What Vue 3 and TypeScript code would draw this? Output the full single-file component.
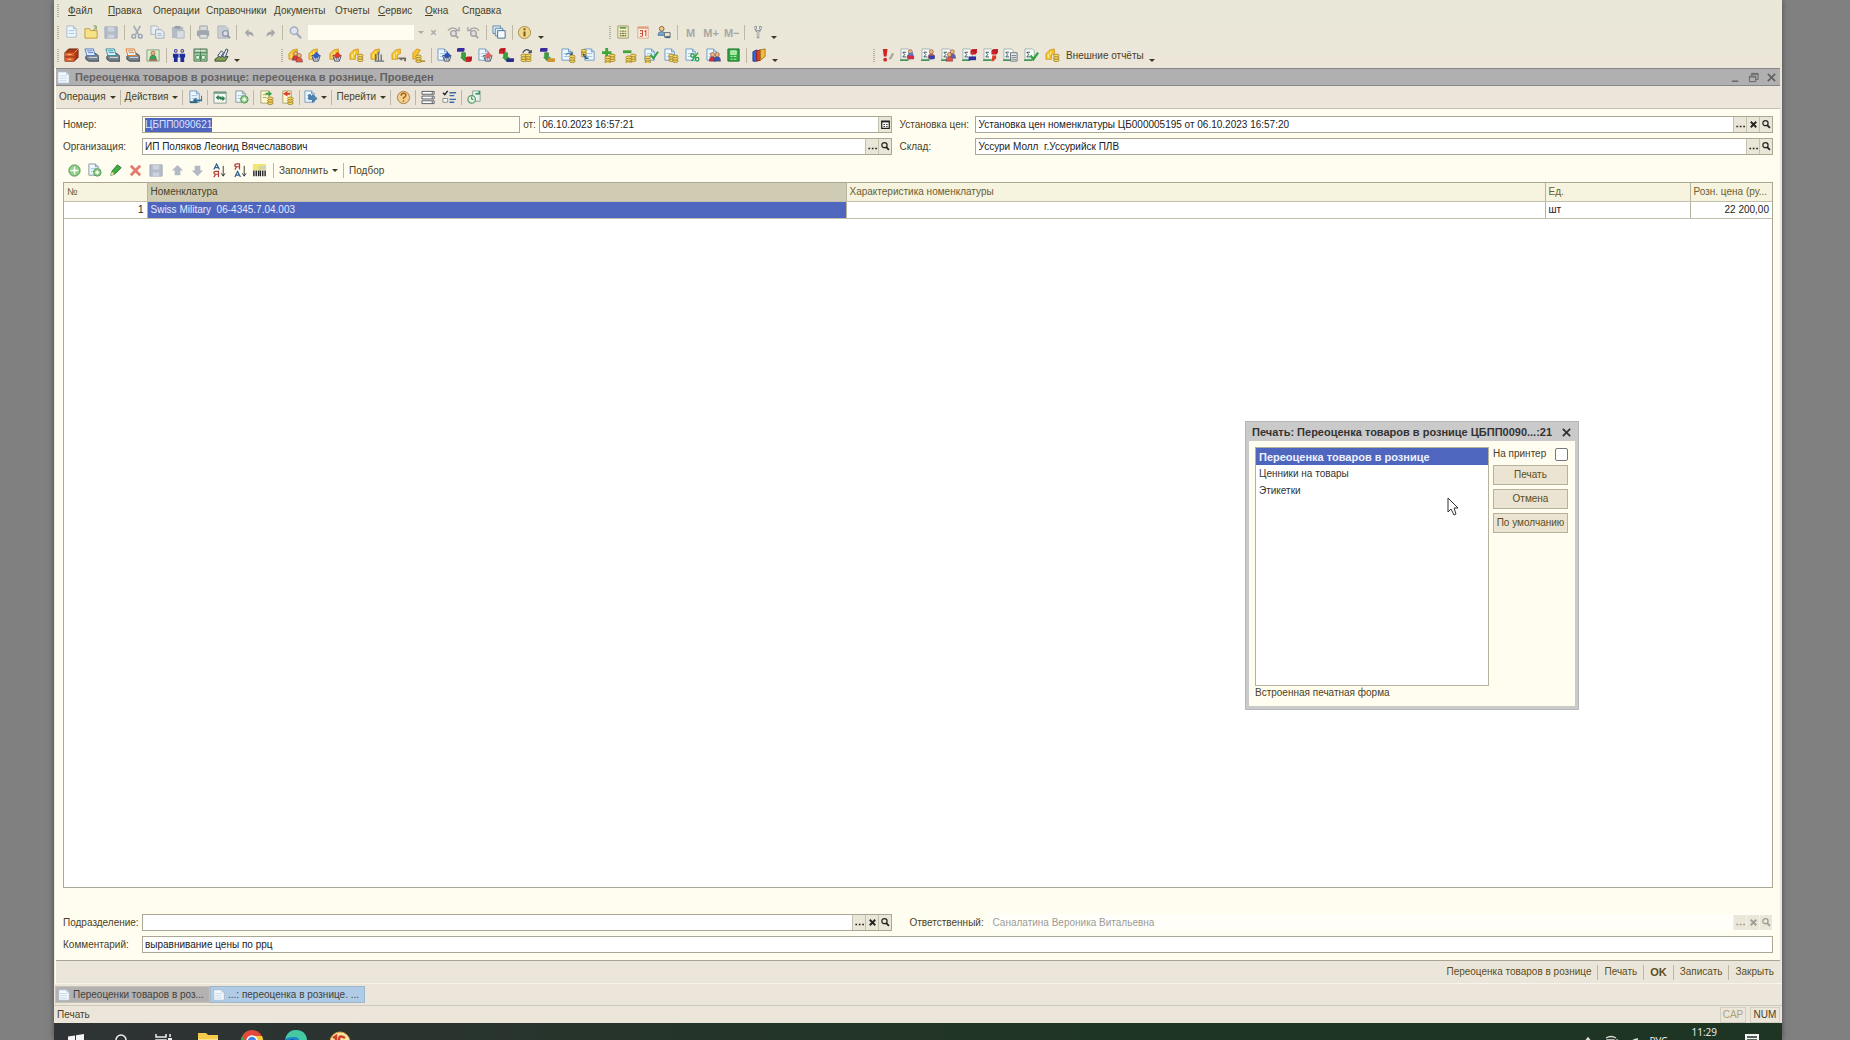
<script setup lang="ts">
import { onMounted, ref } from 'vue'

interface Tool {
  icon?: string
  sep?: boolean
  text?: string
  label: string
}

// Shared building blocks for the 16x16 toolbar glyphs
const page = (x = 1, y = 1, c = '#6f9cc4') =>
  `<path d="M${x} ${y}h7l3 3v9h-10z" fill="#eef7fd" stroke="${c}"/><path d="M${x + 7} ${y}v3h3" fill="none" stroke="${c}"/><path d="M${x + 2} ${y + 5}h6M${x + 2} ${y + 8}h6" stroke="#9fc0da"/>`
const coins = (x: number, y: number) =>
  `<g fill="#f5d75c" stroke="#94752a" stroke-width=".8"><ellipse cx="${x}" cy="${y + 5}" rx="3" ry="1.5"/><ellipse cx="${x}" cy="${y + 2.5}" rx="3" ry="1.5"/><ellipse cx="${x}" cy="${y}" rx="3" ry="1.5"/></g>`
const man = (x: number, y: number, c: string) =>
  `<path d="M${x - 3.5} ${y + 7}q0-5 3.5-5t3.5 5z" fill="${c}" stroke="#5a3550" stroke-width=".5"/><circle cx="${x}" cy="${y}" r="2.2" fill="#f0b47c" stroke="#7a4a33" stroke-width=".6"/>`
const glove = `<path d="M1 12V6l4-4 5-1v5l-3 1v5z" fill="#f6c32c" stroke="#c9901c" stroke-width=".8"/><path d="M3.500 6v5M6 4v3" stroke="#fff09a" stroke-width="1.200"/>`
const basket = (x: number, y: number, c: string) =>
  `<path d="M${x} ${y}h9l-2 6h-5z" fill="#dce3ea" stroke="#444f63"/><path d="M${x + 1} ${y}l4-4 4 4-3 3h-3z" fill="${c}"/><path d="M${x + 2} ${y + 2}v3m2-3v3m2-3v3" stroke="#5a6678" stroke-width=".7"/>`
const box = (x: number, y: number, c: string) =>
  `<path d="M${x} ${y + 2}l2-2h5v4l-2 2h-5z" fill="${c}"/><path d="M${x} ${y + 2}h5v4m0-4l2-2" fill="none" stroke="#0005" stroke-width=".7"/>`
const slab = (x: number, y: number, c: string) =>
  `<path d="M${x} ${y + 1}l1-1h7v3l-1 1h-7z" fill="${c}"/>`
const arrowDn = `<path d="M5 5h4v5h2l-3 4-4-4h1z" fill="#3aa33a" stroke="#1e6e2b" stroke-width=".6"/>`
const sigma = `<path d="M1 1h8l2 2v9H1z" fill="#f7fbf7" stroke="#a3b1b1"/><path d="M6.500 4.500H3l2 2.500-2 2.500h3.500" fill="none" stroke="#3b525c"/><path d="M0 13h9" stroke="#2d8d47" stroke-width="1.500"/>`
const printer = (c: string) =>
  `<path d="M2 9l3-3h8l3 3v5H5l-3-2z" fill="#76828c" stroke="#35404b"/><path d="M5 10h9" stroke="#d9e6ec"/><path d="M1 1h9l2 7H3z" fill="#e5f5ff" stroke="${c}"/><path d="M3 3h6M4 5h6" stroke="${c}"/>`
const plusBall = (x: number, y: number, r: number) =>
  `<circle cx="${x}" cy="${y}" r="${r}" fill="#8fce86" stroke="#519557"/><path d="M${x - r + 2} ${y}h${2 * r - 4}M${x} ${y - r + 2}v${2 * r - 4}" stroke="#fff" stroke-width="1.6"/>`
const lens = (c: string) =>
  `<circle cx="6.500" cy="6" r="4" fill="#dfe4ee" stroke="${c}" stroke-width="1.600"/><path d="M9 9l5 5" stroke="${c}" stroke-width="2.400"/>`
const sorter = (a: string, b: string) =>
  `<path d="${a}" fill="none" stroke="#33628e" stroke-width="1.300"/><path d="${b}" fill="none" stroke="#b23a3a" stroke-width="1.300"/><path d="M13 3v11M11 11l2 3 2-3" fill="none" stroke="#333"/>`

const icons: Record<string, string> = {
  file: page(3, 1, '#a8bccb'),
  sheet: `<path d="M1 1h11l3 3v11H1z" fill="#f4f9fd" stroke="#9fb4c6"/><path d="M12 1v3h3" fill="none" stroke="#9fb4c6"/><path d="M3 6h9M3 9h9M3 12h9" stroke="#bcd0e0"/>`,
  open: `<path d="M1 4h5l1 2h7v8H1z" fill="#f7e288" stroke="#c09a3a"/><path d="M10 6l3-4m0 3V1h-3" fill="none" stroke="#6f9a45"/>`,
  save: `<path d="M1 2h13v12H1z" fill="#b4bcc9" stroke="#a2aab8"/><path d="M4 2h7v5H4zM4 10h7v4H4z" fill="#cdd3dc"/>`,
  cut: `<path d="M4 1l5 9M11 1L6 10" stroke="#a3aab8" stroke-width="1.800"/><circle cx="4" cy="12" r="2" fill="none" stroke="#96a0b4" stroke-width="1.500"/><circle cx="11" cy="12" r="2" fill="none" stroke="#96a0b4" stroke-width="1.500"/>`,
  copy: `<path d="M1 1h6l2 2v7H1z" fill="#e8edf2" stroke="#a8b3c0"/><path d="M6 5h6l3 3v6H6z" fill="#e8edf2" stroke="#9ca9ba"/><path d="M8 9h4M8 11h5" stroke="#a0b0c2"/>`,
  paste: `<path d="M1 2h12v12H1z" fill="#b5bbc5"/><path d="M4 1h6v3H4z" fill="#989fac"/><path d="M6 6h8v8H6z" fill="#d8dde3" stroke="#adb5bf"/>`,
  print: `<path d="M4 1h8v5H4z" fill="#d8dbde" stroke="#9da2a8"/><path d="M1 6h13v6H1z" fill="#a1a6ad"/><path d="M4 10h8v4H4z" fill="#dfe1e3" stroke="#9da2a8"/>`,
  preview: `<path d="M1 1h8l3 3v10H1z" fill="#c9cdd4" stroke="#aeb4be"/><circle cx="9" cy="9" r="3" fill="#dde1e7" stroke="#9098a8" stroke-width="1.500"/><path d="M11 11l3 3" stroke="#9098a8" stroke-width="2"/>`,
  undo: `<path d="M3 8l4-4v3q6 0 5 6-1-3-5-3v3z" fill="#a5a8a8"/>`,
  redo: `<path d="M13 8L9 4v3q-6 0-5 6 1-3 5-3v3z" fill="#a5a8a8"/>`,
  find: lens('#a3adc2'),
  findNext: `<circle cx="8" cy="9" r="3" fill="#dedede" stroke="#a5a5a5" stroke-width="1.500"/><path d="M10 11l3 3" stroke="#a5a5a5" stroke-width="2"/><path d="M2 6q5-6 11 0m1-4v4h-4" fill="none" stroke="#a5a5a5" stroke-width="1.400"/>`,
  findPrev: `<circle cx="8" cy="9" r="3" fill="#dedede" stroke="#a5a5a5" stroke-width="1.500"/><path d="M10 11l3 3" stroke="#a5a5a5" stroke-width="2"/><path d="M14 6Q9 0 3 6M2 2v4h4" fill="none" stroke="#a5a5a5" stroke-width="1.400"/>`,
  wins: `<path d="M1 1h8v8H1z" fill="#e2f0f8" stroke="#5c86a5"/><path d="M3.500 3.500h8v8h-8z" fill="#e2f0f8" stroke="#5c86a5"/><path d="M6 6h8v8H6z" fill="#f5fbff" stroke="#416e91"/>`,
  info: `<circle cx="8" cy="8" r="6.500" fill="#f2d583" stroke="#a18f5c"/><path d="M8 7v5M8 3.500v2" stroke="#6a5520" stroke-width="2"/>`,
  calc: `<path d="M2 1h11v13H2z" fill="#fcf7c9" stroke="#999467"/><path d="M4 3h7" stroke="#6d9c54" stroke-width="2"/><path d="M4 6.500h7M4 9h7M4 11.500h7" stroke="#7f7a52" stroke-width="1.500" stroke-dasharray="2 .5"/>`,
  cal: `<path d="M2 2h11v12H2z" fill="#fff6ea" stroke="#d5a888"/><path d="M2 3h11" stroke="#e59a78" stroke-width="2"/><path d="M4 6h3v6M4 9h3M4 12h3M9 7l1.500-1v6" fill="none" stroke="#cf4e38" stroke-width="1.200"/>`,
  user: `<circle cx="5" cy="4" r="2.500" fill="#f1c88f" stroke="#80653f"/><path d="M1 11q0-4 4-4t4 4z" fill="#7ba9d0" stroke="#587c99"/><path d="M8 8h6v5H8z" fill="#e9e0c0" stroke="#68737d"/><path d="M9 13h5" stroke="#3e6384" stroke-width="2"/>`,
  wrench: `<path d="M5 1v3l1 2h3l1-2V1M7.500 6v8" fill="none" stroke="#8a9094" stroke-width="2.600"/><path d="M5 2v2l1 1h3l1-1V2M7.500 6v7" fill="none" stroke="#eef0f0" stroke-width="1"/>`,
  cabinet: `<path d="M1 5l4-4h10v9l-4 4H1z" fill="#a83c16" stroke="#6e260f"/><path d="M1 5h10v9H1z" fill="#e2612b"/><path d="M11 5l4-4" stroke="#f6a66b"/><path d="M1 9.500h10" stroke="#882c0f"/><path d="M4 7h4M4 12h4" stroke="#ffd0a0"/>`,
  prnBlue: printer('#5476bd'),
  prnTeal: printer('#2e8d9d'),
  prnOrange: printer('#dd7a2e'),
  manGreen: `<path d="M1 2h13v12H1z" fill="#d7efcb" stroke="#8ba180"/>${man(7.5, 5.5, '#35a651')}<path d="M3 13h9" stroke="#bd4a3c"/>`,
  twoMen: `<g fill="#1e2f9c"><circle cx="4" cy="3" r="2"/><circle cx="11" cy="3" r="2"/><path d="M1 6h6v4H6v5H2v-5H1zM8 6h6v4h-1v5H9v-5H8z"/></g><circle cx="4" cy="3" r="1.200" fill="#e6b289"/><circle cx="11" cy="3" r="1.200" fill="#e6b289"/>`,
  safe: `<path d="M1 1h14v13H1z" fill="#9fc79d" stroke="#55745a"/><path d="M1 5h14M8 1v13" stroke="#4c7a57"/><path d="M3 8h4v4H3zM9 8h4v4H9z" fill="#e4f6da" stroke="#4b9b61"/><path d="M3 3h10" stroke="#ebf5e4"/>`,
  ledger: `<path d="M1 12l4-3h10l-3 5H1z" fill="#84a04d" stroke="#3e4c37"/><path d="M4 8l4-5 2 2-3 5zM9 9l4-8 2 1-3 8z" fill="#dfe9ef" stroke="#3d4a68"/>`,
  gManRed: glove + man(8, 6, '#d8373a') + man(12, 8, '#e4573f'),
  gBasketBlue: glove + basket(4, 8, '#315fc2'),
  gBasketRed: glove + basket(4, 8, '#df3a2b'),
  gCoins: glove + coins(12, 8),
  gBars: glove + `<path d="M6 6v8M9 4v10M12 7v7M5 14h10" stroke="#68747c" stroke-width="1.500"/>`,
  gKey: glove + `<path d="M8 11h7v3M11 11v2" fill="none" stroke="#6b6a63" stroke-width="2"/>`,
  gCoins2: `<path d="M2 12V5l4-4 4 1-3 5v4z" fill="#f6c32c" stroke="#c9901c" stroke-width=".8"/>` + coins(8, 9) + `<path d="M10 14h5" stroke="#a5821f" stroke-width="1.500"/>`,
  dBasketBlue: page() + basket(6, 8, '#2d55b5'),
  boxBlueRed: slab(0, 0, '#3b2c9c') + arrowDn + box(9, 9, '#d3222a'),
  dBasketRed: page() + basket(6, 8, '#dd6668'),
  boxRedBlue: box(0, 0, '#d3222a') + arrowDn + slab(8, 11, '#2c2c8e'),
  coinsTurn: coins(5, 8) + coins(10, 8) + `<path d="M4 5q4-6 8-1m1-2v3h-3" fill="none" stroke="#384857" stroke-width="1.300"/>`,
  boxBlueOr: slab(0, 0, '#3b2c9c') + arrowDn + slab(8, 11, '#d3932e'),
  dTurn: page() + coins(12, 9) + `<path d="M5 7q4-3 7-1m0-2v3h-3" fill="none" stroke="#2c5c7e"/>`,
  dReturn: page(4, 1) + coins(3, 3) + `<path d="M5 10q-3-2-2-4m5 5H5V8" fill="none" stroke="#27629d" stroke-width="1.500"/>`,
  plusCoins: `<path d="M5 0v10M0 5h10" stroke="#3fa63c" stroke-width="3"/>` + coins(11, 8) + coins(6, 10),
  minusCoins: `<path d="M0 4h9" stroke="#3fa63c" stroke-width="3"/>` + coins(11, 8) + coins(6, 10),
  dCheck: page() + coins(4, 10) + `<path d="M7 7l3 4 5-7" fill="none" stroke="#31a047" stroke-width="2.200"/>`,
  dCoins: page() + coins(8, 8) + coins(12, 9),
  dPercent: page() + `<path d="M7 14l7-9" stroke="#2ca04c" stroke-width="1.500"/><circle cx="8" cy="8" r="1.800" fill="#fff" stroke="#2ca04c" stroke-width="1.500"/><circle cx="13" cy="12" r="1.800" fill="#fff" stroke="#2ca04c" stroke-width="1.500"/>`,
  dMen: page() + man(7, 7, '#c9303c') + man(12, 7, '#3656b4'),
  greenBook: `<path d="M2 1h12v13H2z" fill="#31a944" stroke="#1c7130"/><path d="M5 3h6v4H5zM5 9h2m1 0h3M5 12h2m1 0h3" fill="#a7e5a0" stroke="#bdf0b4"/>`,
  folders: `<path d="M1 4l4-2v12H1z" fill="#3564d3" stroke="#203c93"/><path d="M5 3l4-1v11l-4 1z" fill="#e0402f" stroke="#952218"/><path d="M9 2l5-1v8l-5 4z" fill="#f5bb36" stroke="#a8781e"/>`,
  bang: `<path d="M3 1h5l-1 8H4z" fill="#d42420"/><circle cx="5.500" cy="12.500" r="2" fill="#d42420"/><path d="M9 12l4-7 2 1-3 6z" fill="#a9a9a0"/>`,
  sManBlue: sigma + man(11, 4, '#dc2f3d') + `<path d="M8 8h7v4H9z" fill="#d32c44"/><path d="M9 5h5v3H9z" fill="#4c7fcb"/>`,
  sManRed: sigma + man(11, 4, '#e55b4c') + `<path d="M8 8h7l-1 4H9z" fill="#2f41b3"/>`,
  sMen: sigma + man(12, 4, '#5a66b0') + man(9, 7, '#e25448'),
  sBoxes: sigma + box(9, 1, '#d3222a') + `<path d="M7 9h8v4H7z" fill="#2c2f9e"/>`,
  sBoxRed: sigma + box(9, 1, '#d3222a') + `<path d="M10 8h4v3l-3 3H9z" fill="#e23a2a"/>`,
  sDoc: sigma + `<path d="M8 5h7v9H8z" fill="#e7eaec" stroke="#6d757d"/><path d="M9 8h5M9 10h5M9 12h5" stroke="#78828a"/>`,
  sCheck: sigma + `<path d="M7 8l3 4 5-7" fill="none" stroke="#31a047" stroke-width="2.400"/>`,
  goBack: page(2, 1) + `<path d="M14 6v4H9V8l-4 3 4 3v-2h6V6z" fill="#316d97"/><path d="M2 13h8" stroke="#2f607f" stroke-width="2"/>`,
  refresh: `<path d="M1 2h13v12H1z" fill="#f7faf2" stroke="#8a9a8d"/><path d="M1 3h13" stroke="#6d9c82" stroke-width="2"/><path d="M3 8l3-3v2h3v2H6v2zM13 9l-3 3v-2H7V8h3V6z" fill="#2d7d51"/>`,
  addDoc: page(2, 1, '#84989f') + plusBall(11, 10, 4),
  post: `<path d="M2 1h9v13H2z" fill="#fff7cd" stroke="#aaa37a"/><path d="M4 5h5M4 8h4" stroke="#a4a078"/><path d="M7 5V3h3V1l4 3-4 3V5z" fill="#3da147"/>` + coins(12, 9),
  unpost: `<path d="M3 1h9v13H3z" fill="#fff7cd" stroke="#aaa37a"/><path d="M8 5h3V3H8V1L3 4l5 3z" fill="#df3f2f"/>` + coins(11, 9),
  goDoc: page(1, 1) + `<path d="M5 5v5h4v3l5-4-5-4v2H7V5z" fill="#4e87b6" stroke="#285a8a" stroke-width=".7"/>`,
  help: `<circle cx="8" cy="8" r="6.500" fill="#f6cf8c" stroke="#a57c49"/><path d="M5.500 6q0-2.500 2.500-2.500t2.500 2q0 1.500-2.500 3v1M8 11v1.500" fill="none" stroke="#a36217" stroke-width="1.500"/>`,
  rows: `<path d="M1 1.500h13v3H1zM1 6.500h13v3H1zM1 11.500h13v3H1z" fill="#fff" stroke="#545b60"/><path d="M12 2v2M12 7v2M12 12v2" stroke="#4b4f53"/>`,
  checks: `<path d="M1 3l2 2 3-4" fill="none" stroke="#222" stroke-width="1.500"/><path d="M1 9h5v4H1z" fill="#fff" stroke="#888"/><path d="M8 3h7M8 6h5M8 10h7M8 13h5" stroke="#3e68ae" stroke-width="1.500"/>`,
  docClock: `<path d="M6 1h8v11H6z" fill="#e5f1ea" stroke="#8aa09a"/><path d="M9 4h4V1" fill="none" stroke="#2c8f50" stroke-width="1.500"/><circle cx="5" cy="10" r="4" fill="#e8f4e4" stroke="#5a9a6c" stroke-width="1.300"/><path d="M5 7v3h2" fill="none" stroke="#44735a"/>`,
  add: plusBall(8, 8, 6),
  pencil: `<path d="M3 13l1-4 6-7 4 3-7 7z" fill="#3fae3b" stroke="#237030"/><path d="M3 13l1-4 3 3z" fill="#f2e3ad"/>`,
  del: `<path d="M3 3l10 10M13 3L3 13" stroke="#e27b6f" stroke-width="3"/>`,
  up: `<path d="M8 2l6 6h-3v5H5V8H2z" fill="#b3bac3"/>`,
  down: `<path d="M8 14l6-6h-3V3H5v5H2z" fill="#b3bac3"/>`,
  sortAz: sorter('M3 7l3-6 3 6M4 5h4', 'M8 15V9H5q-2 0-2 1.500T5 12h3M5 12l-2 3'),
  sortZa: sorter('M3 15l3-6 3 6M4 13h4', 'M8 7V1H5Q3 1 3 2.500T5 4h3M5 4L3 7'),
  barcode: `<path d="M1 1h14v7H1z" fill="#f4e66a"/><path d="M7 3h8v4H7z" fill="#cfd3b8"/><path d="M1 8h14v7H1z" fill="#fff"/><path d="M2 8v6M4.500 8v6M7 8v6M9 8v6M11.500 8v6M14 8v6" stroke="#222" stroke-width="1.500"/>`,
  lens: `<circle cx="6.500" cy="6" r="3.800" fill="none" stroke="currentColor" stroke-width="1.800"/><path d="M9 9l4 4" stroke="currentColor" stroke-width="2.600"/>`,
  cross: `<path d="M4 4l8 8M12 4l-8 8" stroke="currentColor" stroke-width="2.600"/>`,
  dots: `<path d="M2 11h2.500M7 11h2.500M12 11h2.500" stroke="currentColor" stroke-width="2.200"/>`,
  calBtn: `<path d="M2.500 3h11v10.500h-11z" fill="#fff" stroke="#222" stroke-width="1.800"/><path d="M2 4h12" stroke="#222" stroke-width="2"/><path d="M5 8h2M9 8h2M5 11h2M9 11h2" stroke="#222" stroke-width="1.600"/>`,
}

const t = (icon: string, label: string): Tool => ({ icon, label })
const sep: Tool = { sep: true, label: '' }

const menu = [
  ['', 'Ф', 'айл'], ['', 'П', 'равка'], ['Операции', '', ''], ['Справочники', '', ''], ['Документы', '', ''],
  ['Отчеты', '', ''], ['', 'С', 'ервис'], ['', 'О', 'кна'], ['Сп', 'р', 'авка'],
]

const fileTools: Tool[] = [
  t('file', 'Новый'), t('open', 'Открыть'), t('save', 'Сохранить'), sep,
  t('cut', 'Вырезать'), t('copy', 'Копировать'), t('paste', 'Вставить'), sep,
  t('print', 'Печать'), t('preview', 'Просмотр'), sep, t('undo', 'Отменить'), t('redo', 'Вернуть'), sep, t('find', 'Найти'),
]
const findTools: Tool[] = [t('findNext', 'Найти далее'), t('findPrev', 'Найти ранее'), sep, t('wins', 'Окна'), sep, t('info', 'Справка')]
const calcTools: Tool[] = [
  t('calc', 'Калькулятор'), t('cal', 'Календарь'), t('user', 'Пользователь'), sep,
  { text: 'M', label: 'M' }, { text: 'M+', label: 'M+' }, { text: 'M−', label: 'M−' }, sep, t('wrench', 'Настройка'),
]
const deskTools: Tool[] = [
  t('cabinet', 'Номенклатура'), t('prnBlue', 'Чек'), t('prnTeal', 'Отчет'), t('prnOrange', 'Возврат'), t('manGreen', 'Кассир'), sep,
  t('twoMen', 'Контрагенты'), t('safe', 'Касса'), t('ledger', 'Журнал'),
]
const goodsTools: Tool[] = ['gManRed', 'gBasketBlue', 'gBasketRed', 'gCoins', 'gBars', 'gKey', 'gCoins2'].map((i) => t(i, 'Журнал документов'))
const docTools: Tool[] = [
  'dBasketBlue', 'boxBlueRed', 'dBasketRed', 'boxRedBlue', 'coinsTurn', 'boxBlueOr', 'dTurn', 'dReturn',
  'plusCoins', 'minusCoins', 'dCheck', 'dCoins', 'dPercent', 'dMen', 'greenBook',
].map((i) => t(i, 'Документ'))
const reportTools: Tool[] = ['bang', 'sManBlue', 'sManRed', 'sMen', 'sBoxes', 'sBoxRed', 'sDoc', 'sCheck', 'gCoins'].map((i) => t(i, 'Отчет'))
const rowTools: Tool[] = [
  t('add', 'Добавить'), t('addDoc', 'Скопировать'), t('pencil', 'Изменить'), t('del', 'Удалить'), t('save', 'Сохранить'),
  t('up', 'Вверх'), t('down', 'Вниз'), t('sortAz', 'По возрастанию'), t('sortZa', 'По убыванию'), t('barcode', 'Штрихкод'),
]

const actions = ['Переоценка товаров в рознице', 'Печать', 'OK', 'Записать', 'Закрыть']
const forms = ['Переоценка товаров в рознице', 'Ценники на товары', 'Этикетки']
const current = ref(0)
const toPrinter = ref(false)
const number = ref('ЦБПП0090621')
const numberBox = ref<HTMLInputElement | null>(null)

onMounted(() => {
  numberBox.value?.focus()
  numberBox.value?.select()
})
</script>

<template>
  <div class="desktop">
    <div class="app">
      <header class="bars">
        <nav class="menu">
          <i class="grip"></i>
          <a v-for="(m, i) in menu" :key="i" href="#">{{ m[0] }}<u>{{ m[1] }}</u>{{ m[2] }}</a>
        </nav>

        <div class="bar">
          <i class="grip"></i>
          <div class="group g-file">
            <template v-for="(b, i) in fileTools" :key="i">
              <i v-if="b.sep" class="sep"></i>
              <button v-else class="tool" :aria-label="b.label"><svg viewBox="0 0 16 16" v-html="icons[b.icon!]"></svg></button>
            </template>
          </div>
          <input class="search" aria-label="Поиск" />
          <button class="mini" aria-label="История поиска"><i class="caret pale"></i></button>
          <button class="mini pale-x" aria-label="Очистить"><svg viewBox="0 0 16 16" v-html="icons.cross"></svg></button>
          <div class="group g-find">
            <template v-for="(b, i) in findTools" :key="i">
              <i v-if="b.sep" class="sep"></i>
              <button v-else class="tool" :aria-label="b.label"><svg viewBox="0 0 16 16" v-html="icons[b.icon!]"></svg></button>
            </template>
          </div>
          <i class="caret more"></i>
          <i class="grip second"></i>
          <div class="group g-calc">
            <template v-for="(b, i) in calcTools" :key="i">
              <i v-if="b.sep" class="sep"></i>
              <button v-else-if="b.text" class="tool memory">{{ b.text }}</button>
              <button v-else class="tool" :aria-label="b.label"><svg viewBox="0 0 16 16" v-html="icons[b.icon!]"></svg></button>
            </template>
          </div>
          <i class="caret more"></i>
        </div>

        <div class="bar">
          <i class="grip"></i>
          <div class="group g-desk">
            <template v-for="(b, i) in deskTools" :key="i">
              <i v-if="b.sep" class="sep"></i>
              <button v-else class="tool" :aria-label="b.label"><svg viewBox="0 0 16 16" v-html="icons[b.icon!]"></svg></button>
            </template>
          </div>
          <i class="caret more"></i>
          <i class="grip goods"></i>
          <div class="group g-goods">
            <button v-for="(b, i) in goodsTools" :key="i" class="tool" :aria-label="b.label"><svg viewBox="0 0 16 16" v-html="icons[b.icon!]"></svg></button>
          </div>
          <i class="sep loose"></i>
          <div class="group g-docs">
            <button v-for="(b, i) in docTools" :key="i" class="tool" :aria-label="b.label"><svg viewBox="0 0 16 16" v-html="icons[b.icon!]"></svg></button>
          </div>
          <i class="sep loose"></i>
          <button class="tool" aria-label="Папки"><svg viewBox="0 0 16 16" v-html="icons.folders"></svg></button>
          <i class="caret more"></i>
          <i class="grip reports"></i>
          <div class="group g-reports">
            <button v-for="(b, i) in reportTools" :key="i" class="tool" :aria-label="b.label"><svg viewBox="0 0 16 16" v-html="icons[b.icon!]"></svg></button>
          </div>
          <button class="word ext">Внешние отчёты</button>
          <i class="caret more"></i>
        </div>
      </header>

      <section class="window">
        <div class="title">
          <svg class="title-icon" viewBox="0 0 16 16" v-html="icons.sheet"></svg>
          <h1>Переоценка товаров в рознице: переоценка в рознице. Проведен</h1>
          <button aria-label="Свернуть"><svg viewBox="0 0 12 12"><path d="M2 10h7" stroke="currentColor" stroke-width="1.500" /></svg></button>
          <button aria-label="Восстановить"><svg viewBox="0 0 12 12"><path d="M4 4V1.500h7V8H8.500M1.500 4.500h7v6h-7zM1.500 5.500h7M4 2.500h7" fill="none" stroke="currentColor" /></svg></button>
          <button aria-label="Закрыть окно"><svg viewBox="0 0 12 12"><path d="M2 2l8 8M10 2l-8 8" stroke="currentColor" stroke-width="1.800" /></svg></button>
        </div>

        <div class="commands">
          <button class="word">Операция<i class="caret"></i></button><i class="sep"></i>
          <button class="word">Действия<i class="caret"></i></button><i class="sep"></i>
          <button class="tool" aria-label="Провести и закрыть"><svg viewBox="0 0 16 16" v-html="icons.goBack"></svg></button><i class="sep"></i>
          <button class="tool" aria-label="Обновить"><svg viewBox="0 0 16 16" v-html="icons.refresh"></svg></button>
          <button class="tool" aria-label="Скопировать"><svg viewBox="0 0 16 16" v-html="icons.addDoc"></svg></button><i class="sep"></i>
          <button class="tool" aria-label="Провести"><svg viewBox="0 0 16 16" v-html="icons.post"></svg></button>
          <button class="tool" aria-label="Отменить проведение"><svg viewBox="0 0 16 16" v-html="icons.unpost"></svg></button><i class="sep"></i>
          <button class="tool with-caret" aria-label="На основании"><svg viewBox="0 0 16 16" v-html="icons.goDoc"></svg><i class="caret"></i></button><i class="sep"></i>
          <button class="word">Перейти<i class="caret"></i></button><i class="sep"></i>
          <button class="tool" aria-label="Справка"><svg viewBox="0 0 16 16" v-html="icons.help"></svg></button><i class="sep"></i>
          <button class="tool" aria-label="Список"><svg viewBox="0 0 16 16" v-html="icons.rows"></svg></button>
          <button class="tool" aria-label="Настройка списка"><svg viewBox="0 0 16 16" v-html="icons.checks"></svg></button><i class="sep"></i>
          <button class="tool" aria-label="История"><svg viewBox="0 0 16 16" v-html="icons.docClock"></svg></button>
        </div>

        <div class="form">
          <div class="fields">
            <div class="line">
              <label class="lead" for="num">Номер:</label>
              <span class="field cream w-num"><input id="num" ref="numberBox" v-model="number" /></span>
              <label class="from" for="date">от:</label>
              <span class="field w-date"><input id="date" value="06.10.2023 16:57:21" />
                <button aria-label="Выбрать дату"><svg viewBox="0 0 16 16" v-html="icons.calBtn"></svg></button></span>
            </div>
            <div class="line">
              <label class="mid" for="price">Установка цен:</label>
              <span class="field"><input id="price" value="Установка цен номенклатуры ЦБ000005195 от 06.10.2023 16:57:20" />
                <button aria-label="Выбрать"><svg viewBox="0 0 16 16" v-html="icons.dots"></svg></button>
                <button aria-label="Очистить"><svg viewBox="0 0 16 16" v-html="icons.cross"></svg></button>
                <button aria-label="Открыть"><svg viewBox="0 0 16 16" v-html="icons.lens"></svg></button></span>
            </div>
            <div class="line">
              <label class="lead" for="org">Организация:</label>
              <span class="field"><input id="org" value="ИП Поляков Леонид Вячеславович" />
                <button aria-label="Выбрать"><svg viewBox="0 0 16 16" v-html="icons.dots"></svg></button>
                <button aria-label="Открыть"><svg viewBox="0 0 16 16" v-html="icons.lens"></svg></button></span>
            </div>
            <div class="line">
              <label class="mid" for="store">Склад:</label>
              <span class="field"><input id="store" value="Уссури Молл  г.Уссурийск ПЛВ" />
                <button aria-label="Выбрать"><svg viewBox="0 0 16 16" v-html="icons.dots"></svg></button>
                <button aria-label="Открыть"><svg viewBox="0 0 16 16" v-html="icons.lens"></svg></button></span>
            </div>
          </div>

          <div class="row-tools">
            <div class="group g-rows">
              <button v-for="b in rowTools" :key="b.label" class="tool" :aria-label="b.label"><svg viewBox="0 0 16 16" v-html="icons[b.icon!]"></svg></button>
            </div>
            <i class="sep"></i>
            <button class="word">Заполнить<i class="caret"></i></button>
            <i class="sep"></i>
            <button class="word">Подбор</button>
          </div>

          <div class="sheet">
            <table>
              <colgroup><col class="c-no" /><col class="c-name" /><col class="c-name" /><col class="c-unit" /><col class="c-price" /></colgroup>
              <thead>
                <tr><th>№</th><th class="active">Номенклатура</th><th>Характеристика номенклатуры</th><th>Ед.</th><th>Розн. цена (ру...</th></tr>
              </thead>
              <tbody>
                <tr><td class="num">1</td><td class="picked">Swiss Military&nbsp; 06-4345.7.04.003</td><td></td><td>шт</td><td class="num">22 200,00</td></tr>
              </tbody>
            </table>
          </div>

          <div class="fields bottom">
            <div class="line">
              <label class="lead" for="dep">Подразделение:</label>
              <span class="field"><input id="dep" />
                <button aria-label="Выбрать"><svg viewBox="0 0 16 16" v-html="icons.dots"></svg></button>
                <button aria-label="Очистить"><svg viewBox="0 0 16 16" v-html="icons.cross"></svg></button>
                <button aria-label="Открыть"><svg viewBox="0 0 16 16" v-html="icons.lens"></svg></button></span>
            </div>
            <div class="line owner">
              <label class="resp" for="resp">Ответственный:</label>
              <span class="field off"><input id="resp" value="Саналатина Вероника Витальевна" disabled />
                <button disabled aria-label="Выбрать"><svg viewBox="0 0 16 16" v-html="icons.dots"></svg></button>
                <button disabled aria-label="Очистить"><svg viewBox="0 0 16 16" v-html="icons.cross"></svg></button>
                <button disabled aria-label="Открыть"><svg viewBox="0 0 16 16" v-html="icons.lens"></svg></button></span>
            </div>
            <div class="line wide">
              <label class="lead" for="note">Комментарий:</label>
              <span class="field"><input id="note" value="выравнивание цены по ррц" /></span>
            </div>
          </div>
        </div>

        <div class="actions">
          <template v-for="(a, i) in actions" :key="a">
            <i v-if="i" class="sep"></i>
            <button class="word" :class="{ main: a === 'OK' }">{{ a }}</button>
          </template>
        </div>

        <div class="dialog" role="dialog" aria-labelledby="dlg-title">
          <div class="dlg-head">
            <h2 id="dlg-title">Печать: Переоценка товаров в рознице ЦБПП0090...:21</h2>
            <button aria-label="Закрыть диалог"><svg viewBox="0 0 12 12"><path d="M2 2l8 8M10 2l-8 8" stroke="currentColor" stroke-width="2" /></svg></button>
          </div>
          <div class="dlg-body">
            <ul class="list">
              <li v-for="(f, i) in forms" :key="f" :class="{ on: i === current }" @click="current = i">{{ f }}</li>
            </ul>
            <div class="side">
              <label class="tick" for="toprn">На принтер<input id="toprn" v-model="toPrinter" type="checkbox" /></label>
              <button>Печать</button>
              <button>Отмена</button>
              <button>По умолчанию</button>
            </div>
          </div>
          <p class="hint">Встроенная печатная форма</p>
          <svg class="cursor" viewBox="0 0 12 19"><path d="M1 1v14l3-3 3 6 2-1-2-6h4z" fill="#fff" stroke="#333" /></svg>
        </div>
      </section>

      <div class="tabs">
        <button><svg viewBox="0 0 16 16" v-html="icons.sheet"></svg>Переоценки товаров в роз...</button>
        <button class="on"><svg viewBox="0 0 16 16" v-html="icons.sheet"></svg>...: переоценка в рознице. ...</button>
      </div>

      <footer class="status">
        <span>Печать</span>
        <span class="lamp dim">CAP</span>
        <span class="lamp">NUM</span>
      </footer>

      <div class="taskbar">
        <svg class="task" viewBox="0 0 24 24"><path d="M4 6.500l7-1V12H4zM12 5.300l8-1.300v8h-8zM4 13h7v6H4zM12 13h8v7h-8z" fill="#f5f5f5" /></svg>
        <svg class="task" viewBox="0 0 24 24"><circle cx="13" cy="10" r="5" fill="none" stroke="#eee" stroke-width="1.500" /><path d="M10 14l-5 6" stroke="#eee" stroke-width="1.500" /></svg>
        <svg class="task" viewBox="0 0 24 24"><path d="M4 4v3h10V4M4 10h10v8H4zM18 4v3M18 12v7" fill="none" stroke="#eee" stroke-width="1.500" /><path d="M16 8h4v3h-4z" fill="#eee" /></svg>
        <svg class="task" viewBox="0 0 24 24"><path d="M2 3h8l2 2h10v16H2z" fill="#f6cb4c" /><path d="M2 9h20v12H2z" fill="#fae08b" /></svg>
        <svg class="task" viewBox="0 0 24 24"><circle cx="12" cy="11" r="11" fill="#e24a3b" /><path d="M2 6l6 9 4 7A11 11 0 0 1 2 6z" fill="#39a853" /><path d="M12 6h10a11 11 0 0 1-10 16l5-8z" fill="#f7c93c" /><circle cx="12" cy="11" r="5" fill="#4285e8" stroke="#fff" stroke-width="1.500" /></svg>
        <svg class="task" viewBox="0 0 24 24"><circle cx="12" cy="11" r="11" fill="#1a86cf" /><path d="M1 9Q4 0 12 0q10 0 11 10-1 5-8 4 2-7-5-7-6 0-9 2z" fill="#45c9a0" /><path d="M10 9q-4 8 4 12-9 2-12-5-1-7 8-7z" fill="#15599f" /></svg>
        <svg class="task" viewBox="0 0 24 24"><circle cx="12" cy="12" r="10" fill="#f6e6a6" stroke="#d99a43" /><path d="M5 8l3-2v9M17 8q-6-4-6 2t6 4" fill="none" stroke="#cf3f28" stroke-width="2.500" /></svg>
        <span class="space"></span>
        <svg class="tray" viewBox="0 0 16 16"><path d="M4 9l4-5 4 5" fill="none" stroke="#ddd" stroke-width="1.500" /></svg>
        <svg class="tray" viewBox="0 0 16 16"><path d="M3 4q5-3 10 0M4 6h7v7H4zM11 8l3-2v6l-3-2" fill="none" stroke="#ddd" stroke-width="1.300" /></svg>
        <svg class="tray" viewBox="0 0 16 16"><path d="M3 12q1-6 9-7M6 13q1-4 6-5M9 13q1-1 3-2" fill="none" stroke="#ddd" stroke-width="1.300" /></svg>
        <span class="lang">РУС</span>
        <time class="clock">11:29</time>
        <svg class="note" viewBox="0 0 16 16"><path d="M1 2h14v11h-4l-3 3v-3H1z" fill="#f2f2f2" /><path d="M3 5h10M3 8h10" stroke="#243526" stroke-width="1.500" /></svg>
      </div>
    </div>
  </div>
</template>

<style>
html,
body,
#app {
  height: 100%;
}
body {
  margin: 0;
}
</style>

<style scoped>
.desktop {
  box-sizing: border-box;
  height: 100vh;
  overflow: hidden;
  padding: 0 68px 0 54px;
  background: #808080;
  color: #4a4126;
  font: 10px/14px "Liberation Sans", sans-serif;
}
.desktop *,
.desktop *::before {
  box-sizing: border-box;
}
button,
input {
  margin: 0;
  padding: 0;
  border: 0;
  background: none;
  color: inherit;
  font: inherit;
}
button {
  display: flex;
  align-items: center;
  justify-content: center;
  white-space: nowrap;
}
label {
  white-space: nowrap;
}
svg {
  display: block;
  flex: none;
}
h1,
h2,
p,
ul {
  margin: 0;
  padding: 0;
}
.app {
  display: flex;
  flex-direction: column;
  height: 100%;
  background: #ebe6d9;
  box-shadow: 0 0 6px #4d4d4d;
}
.bars {
  height: 68px;
  background: linear-gradient(#e9e8d9, #ece6d9);
}
.menu {
  display: grid;
  grid-template-columns: 14px 40px 45px 53px 68px 61px 43px 47px 37px 60px;
  align-items: center;
  height: 21px;
}
.menu a {
  color: inherit;
  text-decoration: none;
}
.grip {
  flex: none;
  width: 2px;
  height: 13px;
  margin: 0 4px 0 3px;
  background: repeating-linear-gradient(#b5b19f 0 1px, transparent 1px 2px);
}
.bar {
  display: flex;
  align-items: center;
  height: 23px;
}
.group {
  display: flex;
  flex: none;
  align-items: center;
  justify-content: space-between;
}
.tool {
  flex: none;
  width: 16px;
  height: 16px;
}
.tool svg {
  width: 15px;
  height: 15px;
}
.sep {
  flex: none;
  width: 1px;
  height: 15px;
  background: #bdb8a6;
}
.caret {
  flex: none;
  border: 3px solid transparent;
  border-top-color: #3d3822;
  border-bottom: 0;
}
.caret.pale {
  border-top-color: #aaa;
}
.more {
  margin-top: 10px;
  margin-left: 5px;
}
.g-file {
  width: 241px;
}
.search {
  width: 106px;
  height: 15px;
  margin-left: 4px;
  background: #fffdf1;
}
.mini {
  width: 13px;
  height: 13px;
}
.pale-x svg {
  width: 9px;
  height: 9px;
  color: #aaa;
}
.g-find {
  width: 88px;
  margin-left: 5px;
}
.second {
  margin-left: 65px;
}
.g-calc {
  width: 151px;
}
.memory {
  color: #a8a8a3;
  font: bold 11px/14px "Liberation Sans", sans-serif;
}
.g-desk {
  width: 166px;
}
.goods {
  margin-left: 41px;
}
.g-goods {
  width: 140px;
}
.loose {
  margin: 0 4px;
}
.g-docs {
  width: 306px;
}
.reports {
  margin-left: 95px;
}
.g-reports {
  width: 181px;
}
.ext {
  margin-left: 6px;
}

.window {
  position: relative;
  display: flex;
  flex: 1;
  flex-direction: column;
  min-height: 0;
  margin: 0 2px 0 1px;
  border-left: 1px solid #fff;
}
.title {
  display: flex;
  align-items: center;
  height: 18px;
  border: 1px solid #85858a;
  border-width: 1px 0;
  background: #b1b0b1;
  color: #626262;
}
.title-icon {
  width: 13px;
  height: 13px;
  margin: 0 5px 0 1px;
}
h1 {
  flex: 1;
  font: bold 11px/14px "Liberation Sans", sans-serif;
}
.title button {
  width: 18px;
  height: 14px;
}
.title button svg {
  width: 11px;
  height: 11px;
}
.commands {
  display: flex;
  align-items: center;
  gap: 5px;
  height: 23px;
  padding-left: 3px;
  border-bottom: 1px solid #c3bfae;
}
.commands .word,
.row-tools .word {
  gap: 4px;
}
.commands .sep {
  margin: 0 -1px;
}
.commands .with-caret {
  width: 23px;
  gap: 2px;
}
.form {
  display: flex;
  flex: 1;
  flex-direction: column;
  min-height: 0;
  padding: 7px;
  background: #fffdf0;
}
.fields {
  display: grid;
  grid-template-columns: 829fr 873fr;
  gap: 5px 7px;
}
.line {
  display: flex;
  align-items: center;
  min-width: 0;
  height: 17px;
}
.lead {
  flex: none;
  width: 79px;
}
.mid {
  flex: none;
  width: 76px;
}
.owner {
  padding-left: 10px;
}
.resp {
  flex: none;
  width: 80px;
}
.wide {
  grid-column: 1 / -1;
}
.from {
  flex: none;
  width: 19px;
  padding-left: 3px;
}
.field {
  display: flex;
  flex: 1 1 0;
  min-width: 0;
  height: 17px;
  border: 1px solid #aaa894;
  background: #fff;
  color: #222;
}
.w-num {
  flex-grow: 378;
}
.w-date {
  flex-grow: 353;
}
.cream {
  background: #fffdf0;
}
.field input {
  flex: 1;
  min-width: 0;
  padding: 0 2px;
  outline: 0;
}
.field input::selection {
  background: #4f66bf;
  color: #dbe2ff;
}
.field button {
  flex: none;
  width: 13px;
  border-left: 1px solid #c4c1ae;
  background: #ebe7d8;
}
.field button svg {
  width: 11px;
  height: 11px;
}
.off {
  border-color: transparent;
  background: #fffef8;
  color: #9c9c98;
}
.off button {
  border-color: #f5f2e4;
}
.row-tools {
  display: flex;
  align-items: center;
  gap: 5px;
  height: 27px;
  padding: 4px 0 0 3px;
}
.g-rows {
  width: 202px;
}
.sheet {
  flex: 1;
  min-height: 0;
  border: 1px solid #aaa894;
  background: #fff;
}
table {
  width: 100%;
  border-collapse: collapse;
  table-layout: fixed;
}
.c-no {
  width: 83px;
}
.c-unit {
  width: 145px;
}
.c-price {
  width: 82px;
}
th,
td {
  overflow: hidden;
  height: 17px;
  padding: 0 3px;
  border-right: 1px solid #b6b39e;
  border-bottom: 1px solid #c2bfae;
  text-align: left;
  font-weight: normal;
  white-space: nowrap;
}
th {
  height: 18px;
  background: #f6f3df;
  color: #6b6030;
}
th:last-child,
td:last-child {
  border-right: 0;
}
th.active {
  background: #cfccb3;
  color: #4a4126;
}
td {
  color: #222;
}
td.num {
  text-align: right;
}
td.picked {
  background: #4f66bf;
  color: #e8ecff;
}
.bottom {
  margin-top: 26px;
}
.actions {
  display: flex;
  align-items: center;
  justify-content: flex-end;
  gap: 6px;
  height: 23px;
  padding-right: 6px;
  border-top: 1px solid #a9a696;
}
.actions .word {
  color: #5b4d1c;
}
.actions .main {
  font: bold 11px/14px "Liberation Sans", sans-serif;
}

.dialog {
  position: absolute;
  top: 353px;
  right: 201px;
  display: flex;
  flex-direction: column;
  width: 334px;
  height: 289px;
  padding: 3px;
  border: 1px solid #b7b7b7;
  background: #fffdf0;
  box-shadow: inset 0 0 0 3px #cbcaca;
}
.dlg-head {
  display: flex;
  align-items: center;
  height: 14px;
  padding: 0 3px;
  background: #cbcaca;
  color: #333;
}
h2 {
  flex: 1;
  font: bold 11px/14px "Liberation Sans", sans-serif;
  white-space: nowrap;
}
.dlg-head svg {
  width: 11px;
  height: 11px;
}
.dlg-body {
  display: flex;
  flex: 1;
  gap: 4px;
  padding: 6px 7px 0 6px;
  border-top: 2px solid #cbcaca;
}
.list {
  flex: 1;
  border: 1px solid #b5b29e;
  background: #fff;
  color: #333;
  list-style: none;
}
.list li {
  height: 17px;
  padding: 2px 3px;
}
.list .on {
  background: #4f66bf;
  color: #eef1ff;
  font: bold 11px/14px "Liberation Sans", sans-serif;
}
.side {
  display: flex;
  flex-direction: column;
  gap: 4px;
  width: 75px;
}
.tick {
  display: flex;
  align-items: center;
  justify-content: space-between;
  height: 14px;
}
.tick input {
  width: 13px;
  height: 13px;
  border: 1px solid #777;
  border-radius: 2px;
  background: #fff;
  appearance: none;
}
.side button {
  height: 20px;
  border: 1px solid #b9b29a;
  background: #ebe4d2;
  color: #5b4d1c;
}
.hint {
  height: 20px;
  padding: 0 6px;
}
.cursor {
  position: absolute;
  top: 75px;
  left: 201px;
  width: 12px;
  height: 19px;
}

.tabs {
  display: flex;
  height: 22px;
  padding: 2px 0 2px 1px;
  border-top: 1px solid #f7f5ec;
}
.tabs button {
  justify-content: flex-start;
  width: 155px;
  padding-left: 2px;
  border: 1px solid #c5c2b8;
  background: #b3b2b0;
  color: #45413a;
}
.tabs .on {
  border-color: #9cb7cc;
  background: #b0cbe6;
}
.tabs svg {
  width: 12px;
  height: 12px;
  margin-right: 3px;
}
.status {
  display: flex;
  align-items: center;
  gap: 4px;
  height: 18px;
  padding: 0 2px 0 3px;
  border-top: 1px solid #cdc9bb;
}
.status span:first-child {
  flex: 1;
}
.lamp {
  width: 30px;
  border: 1px solid #d3cfc0;
  text-align: center;
}
.dim {
  width: 26px;
  color: #aaa17f;
}
.taskbar {
  display: flex;
  align-items: flex-start;
  height: 17px;
  overflow: hidden;
  padding: 7px 22px 0 10px;
  background: linear-gradient(90deg, #2f3335, #1f3523 60%, #1f3523);
  color: #e8e8e8;
}
.task {
  width: 24px;
  height: 24px;
  margin-right: 20px;
}
.space {
  flex: 1;
}
.tray {
  width: 16px;
  height: 16px;
  margin: 4px 7px 0 0;
}
.lang {
  margin-top: 4px;
  font: 10px/14px "Noto Sans", sans-serif;
}
.clock {
  margin: -5px 27px 0 24px;
  font: 10px/14px "Noto Sans", sans-serif;
}
.note {
  width: 16px;
  height: 16px;
  margin-top: 2px;
}
</style>
